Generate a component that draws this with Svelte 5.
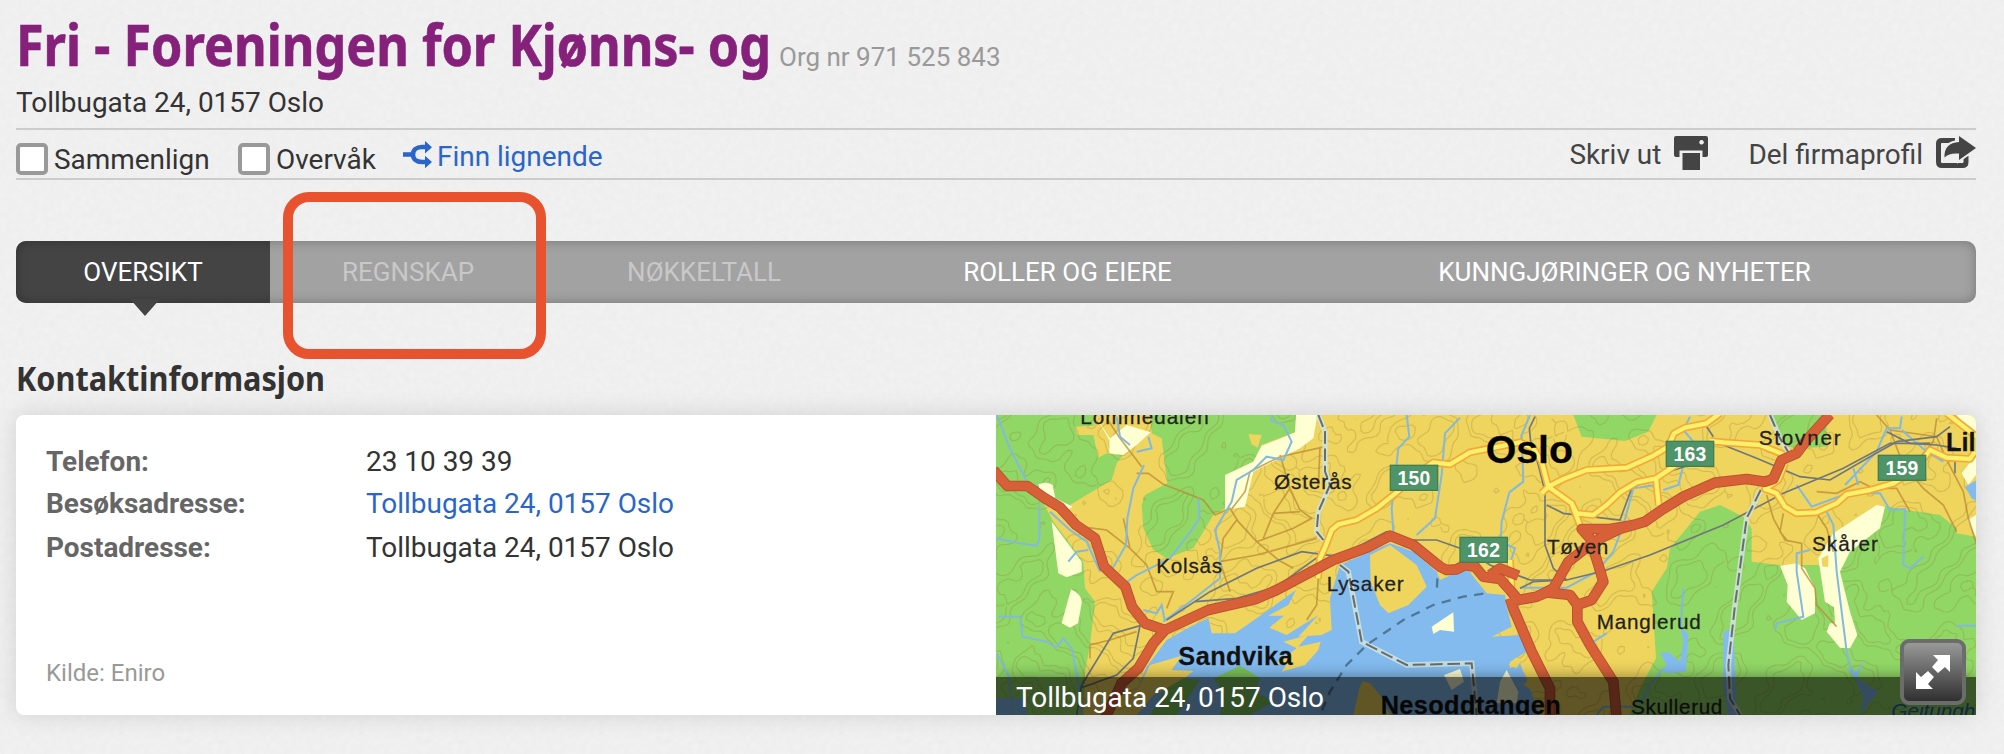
<script>
  const tabs = [
    { label: 'OVERSIKT', width: 254, state: 'active' },
    { label: 'REGNSKAP', width: 276, state: 'disabled' },
    { label: 'NØKKELTALL', width: 316, state: 'disabled' },
    { label: 'ROLLER OG EIERE', width: 411, state: '' },
    { label: 'KUNNGJØRINGER OG NYHETER', width: 703, state: '' }
  ];

  // Height contours: level sets of a smooth terrain function, traced by marching squares.
  function height(x, y) {
    const u = x / 100, v = y / 100;
    return (
      Math.sin(u * 1.7 + Math.sin(v * 1.3) * 1.4) +
      Math.cos(v * 2.1 + Math.sin(u * 1.1) * 1.7) +
      0.45 * Math.sin(u * 4.3 + v * 2.9) +
      0.3 * Math.cos(v * 6.1 - u * 3.7) +
      0.16 * Math.sin(u * 11.3 + v * 8.7)
    );
  }
  function trace() {
    const step = 12;
    let d = '';
    for (let x = 18; x < 2958; x += step) {
      for (let y = 30; y < 930; y += step) {
        const c = [[x, y], [x + step, y], [x + step, y + step], [x, y + step]];
        const h = c.map(([a, b]) => height(a, b));
        for (const level of [-1.5, -0.8, 0.9, 1.5]) {
          const hits = [];
          for (let i = 0; i < 4; i++) {
            const j = (i + 1) % 4;
            if (h[i] > level !== h[j] > level) {
              const t = (level - h[i]) / (h[j] - h[i]);
              hits.push(`${(c[i][0] + (c[j][0] - c[i][0]) * t).toFixed(0)} ${(c[i][1] + (c[j][1] - c[i][1]) * t).toFixed(0)}`);
            }
          }
          if (hits.length >= 2) d += `M${hits[0]}L${hits[1]}`;
        }
      }
    }
    return d;
  }
  const contours = trace();

  const yellowRoads = [
    'M984 520L990 460L1008 420L1025 375L1045 358L1100 345L1160 310L1220 262L1270 215L1330 172L1380 178L1440 142L1500 130L1590 112L1630 130L1655 170L1675 245L1655 265M1675 245L1720 222L1790 195L1910 188L1990 152L2035 125L2052 85L2085 68L2150 55L2190 25',
    'M1675 245L1745 295L1760 325L1810 330L1850 300L1890 262L1940 232L1998 220L2050 185L2110 150M1998 220L2006 300M1745 295L1770 360M2160 108L2200 112L2310 120L2380 148M2385 175L2365 225L2325 252L2360 265L2385 305L2420 325L2480 322L2540 295L2570 268L2640 255L2710 235L2780 190L2820 135L2870 158L2940 162L2955 140M2870 25L2960 95M1560 465L1565 545'
  ];
  const redRoads =
    'M10 195L52 243L112 243L165 280L210 307L258 360L315 400L342 485L406 545L426 605L465 655L525 675L655 615L795 583L860 555L1030 465L1130 428L1200 392L1270 420L1350 485L1370 495L1400 493L1425 480L1455 485L1480 515L1530 522L1560 555L1585 585L1640 575L1690 550L1710 515L1735 470L1780 435L1830 400L1890 372L1965 350L2015 315L2080 275L2175 233L2270 222L2325 230L2350 222L2375 165L2420 145L2450 105L2520 28M525 675L490 715L445 790L395 835L345 940M1560 580L1570 610L1625 740L1680 850L1680 940M1640 575L1670 562L1740 570L1762 600L1762 650L1800 720L1870 830L1880 940M1762 600L1805 585L1840 530L1825 480L1800 400L1775 372L1860 372L1930 360M1500 510L1530 490L1585 512';
</script>

<div class="page">
  <header>
    <div class="titleline">
      <svg class="title" width="756" height="84" viewBox="0 0 756 84" role="img" aria-label="Fri - Foreningen for Kjønns- og">
        <text x="0" y="66" textLength="755" lengthAdjust="spacingAndGlyphs">Fri - Foreningen for Kjønns- og</text>
      </svg>
      <span class="org">Org nr 971 525 843</span>
    </div>
    <div class="address">Tollbugata 24, 0157 Oslo</div>
  </header>

  <div class="tools">
    <label><i class="box"></i>Sammenlign</label>
    <label class="watch"><i class="box"></i>Overvåk</label>
    <a class="similar" href="#similar">
      <svg width="29" height="28" viewBox="0 0 29 28">
        <path d="M0 13.500H10M24 6H19C13.500 6 10 9 10 13.500S13.500 21 19 21H24" fill="none" stroke="currentColor" stroke-width="4.600" />
        <path d="M22 0L29 6.200L22 12.500ZM22 14.800L29 21L22 27.300Z" fill="currentColor" />
      </svg>
      Finn lignende
    </a>
    <div class="actions">
      <span>Skriv ut</span>
      <svg class="printer" width="34" height="34" viewBox="0 0 34 34">
        <path fill="#444" fill-rule="evenodd" d="M2 0H32Q34 0 34 2V19Q34 21 32 21H28.500V14.500H5.500V21H2Q0 21 0 19V2Q0 0 2 0ZM27.500 4A2.300 2.300 0 1 0 27.600 4ZM8.500 17H26V34H8.500Z" />
      </svg>
      <span>Del firmaprofil</span>
      <svg class="share" width="40" height="33" viewBox="0 0 40 33">
        <path d="M19 4.500H6Q2.500 4.500 2.500 7.500V26Q2.500 29.500 6 29.500H26.500Q30 29.500 30 26V20" fill="none" stroke="#444" stroke-width="5" />
        <path d="M23 0L40 12L23 24V17.500C16 17 12 18 8.500 21.500C8 11.500 13.500 6.500 23 6Z" fill="#444" stroke="#eee" stroke-width="4" paint-order="stroke" />
      </svg>
    </div>
  </div>

  <nav>
    {#each tabs as tab}
      <a href="#tab" class={tab.state} style="width:{tab.width}px"><span>{tab.label}</span></a>
    {/each}
    <div class="marker"></div>
  </nav>

  <svg class="heading" width="320" height="40" viewBox="0 0 320 40" role="img" aria-label="Kontaktinformasjon">
    <text x="0" y="31" textLength="309" lengthAdjust="spacingAndGlyphs">Kontaktinformasjon</text>
  </svg>

  <section class="card">
    <div class="info">
      <dl>
        <dt>Telefon:</dt><dd>23 10 39 39</dd>
        <dt>Besøksadresse:</dt><dd><a href="#map">Tollbugata 24, 0157 Oslo</a></dd>
        <dt>Postadresse:</dt><dd>Tollbugata 24, 0157 Oslo</dd>
      </dl>
      <div class="source">Kilde: Eniro</div>
    </div>
    <div class="map">
      <svg width="980" height="300" viewBox="18 30 2940 900">
        <rect x="18" y="30" width="2940" height="900" fill="#efd45e" />
        <g fill="#91d766">
          <path d="M18 30H310L312 62L255 65L262 90L310 90L325 158L350 145L398 152L380 175L365 225L240 300L150 275L190 350L280 470L285 550L315 590L300 720L285 800L280 930H18Z" />
          <path d="M480 30H920V80L815 120L790 170L708 210L705 310L670 330L610 430L530 460L490 435L460 370L455 300L465 270L532 235L515 100L485 85Z" />
          <path d="M1750 30H2000L1975 80L1905 108L1775 95ZM2340 30H2510V125L2430 130L2390 125L2360 80Z" />
          <path d="M1918 930L1950 850L1998 760L1985 560L2030 490L2040 430L2090 370L2130 320L2190 300L2260 335L2285 370V470L2370 480H2490L2530 385L2680 302L2750 315L2850 330L2900 370L2900 385L2958 395V930Z" />
        </g>
        <path d="M775 87L815 90L803 128L785 118Z" fill="#efd45e" />
        <path d={contours} fill="none" stroke="#8f7f33" stroke-opacity=".27" stroke-width="3.500" stroke-linecap="round" />
        <g fill="#ffffd4">
          <path d="M145 238Q170 228 188 240L196 280L248 305L225 320L155 275ZM185 350L275 470V500L230 517L205 505ZM243 553Q278 570 275 595L264 655L240 668L215 655ZM320 40L360 100L410 60L482 82L440 120L400 150L358 145V105ZM918 30H982L970 100L930 130L790 200L765 305L705 315V210L790 170L815 122L860 105L915 82Z" />
          <g transform="translate(1980)">
            <path d="M390 482L440 475L465 490L495 550V625L455 645L410 590L413 540ZM505 460L550 385L680 300L705 305L690 370L600 440L570 500L600 620L622 690L600 730L570 728L530 680L540 655L555 655L552 607L525 590ZM920 30H978V90L955 75ZM978 150L935 205L955 240L978 210ZM953 345L978 330V395Z" />
          </g>
        </g>
        <g fill="#83bbef">
          <path d="M452 830L470 785L530 705L600 665L655 640L665 685L735 685L800 640L918 555L895 600L835 632L882 632L838 668L890 690L985 630L925 695L995 690L1025 675L1020 580L1050 480L1140 440L1200 415L1270 440L1340 500L1350 525L1430 490L1490 565L1545 570L1550 605L1565 665L1505 695L1590 690L1610 740L1560 770V790L1590 775L1650 930H440Z" />
          <path d="M2978 215L2925 245L2945 280L2978 300ZM2070 660L2095 690L2088 800L2040 805L2010 800L2030 780L2010 745L2035 740L2070 770L2080 710ZM2200 680L2230 670L2240 930H2215L2200 850ZM2570 790L2600 800L2625 760L2600 820L2665 860L2640 890L2610 930L2620 880L2595 820ZM18 880H110V930H18Z" />
        </g>
        <path d="M1325 665L1390 622L1392 680L1350 675L1330 687ZM1362 810L1410 792L1422 830L1385 855ZM1530 830L1550 795L1585 860L1580 895H1520Z" fill="#ffffd4" />
        <g fill="#efd45e">
          <path d="M1140 450L1200 420L1280 480L1310 545L1255 600L1195 625L1170 600L1142 530ZM875 800L895 770L850 782L920 730L880 710L955 690L925 725L992 710L985 735L945 780ZM480 780L575 752L545 795L610 798L560 840L490 870L440 930H420L450 840ZM1090 930L1108 850L1118 828L1140 835L1170 870L1200 930ZM1555 780L1575 760L1592 768L1580 790ZM1600 840L1620 822L1645 830L1635 860Z" />
          <path d="M2495 460L2515 450V485H2497Z" />
        </g>
        <path d="M672 820L750 782L810 820L795 860L850 890L780 930H690L700 870ZM530 850L580 820L630 825L600 870L560 930H480Z" fill="#7bc25a" />

        <g fill="none" stroke="#b98a35" stroke-opacity=".75" stroke-width="5">
          <path d="M440 205H475L520 238L590 265L640 285L675 330L720 310L745 350L800 410L865 465L910 490M1005 125L870 155L780 200L765 260L725 312M870 150L885 200L900 250L930 315L965 340L910 370L800 410M990 125L985 250M900 250L850 325L820 400M850 325L930 320M270 365L350 375L420 430L470 480L500 560H550L530 610M740 345L700 400L690 470L720 560M690 470L800 450L980 400M350 40L390 100L455 185M985 520L980 600L950 645M300 760V720L360 705L440 680M400 340L420 430" />
          <path d="M2330 270L2350 340L2385 405L2435 415V490L2475 550L2480 600L2540 665M2380 325L2370 380L2395 410M2480 325L2510 370L2530 440M2660 30L2700 75L2840 95L2870 165L2920 260L2935 340L2960 420M2700 75L2740 180L2800 250L2860 300L2900 380M2480 260L2540 265L2610 230L2650 250L2720 250L2760 320M2840 40L2830 110L2770 180" />
        </g>
        <g fill="none" stroke="#82b9df" stroke-width="6">
          <path d="M20 30L60 130L108 225M148 300V400L140 422L90 415L18 400M25 635H90L98 695L170 710L197 728L220 700L245 730L265 830L275 930M20 745L55 810L70 930M180 320L240 375L290 410L330 500M235 470L260 440L295 435M380 35L390 95L420 120M440 140L485 130L475 95M462 180L430 250L412 340L408 420L365 495M625 280L628 340L605 375L540 460L440 510L405 535M845 30V48L880 60L905 110L880 165L830 155L790 195L740 225L725 290L675 375L690 440L690 520L600 590L520 650M460 615L500 625L515 600L525 650" />
          <path d="M1250 30L1258 95L1225 130L1205 310L1210 380M1410 38L1365 85L1355 210L1335 340L1280 390M1620 30L1595 90L1600 230L1558 262L1535 350L1532 410L1575 430L1555 490M1590 548H1730L1820 500L1870 440L1900 360L1930 250L2000 240M1810 710L1850 685M1820 930L1840 905H1930M1950 900L1980 840L2020 790" />
          <path d="M2100 35L2080 75L2110 110M2078 190L2065 240L2020 255M2080 550L2072 670M2420 240L2465 305L2560 270M2735 35L2730 70H2690L2660 140L2565 240M2735 75L2810 140L2860 170M2590 190L2605 240M2630 265H2670L2700 315L2745 312L2740 480L2760 490L2800 455M2510 320L2530 360L2540 500L2570 740L2585 800M2460 435L2420 445V500L2440 635L2360 655L2355 675M2900 662H2960" />
        </g>
        <g fill="none" stroke="#6f777c" stroke-width="5">
          <path d="M530 645L660 560L800 490L935 440L1045 455L1190 380L1260 405H1340L1440 440L1500 480L1620 525L1730 525L1840 498L1980 450L2200 360L2380 265L2560 190L2700 115L2820 115M615 590L740 580L860 545L985 455M275 840L370 685L450 662L430 760L380 810L270 850M260 930L275 840" />
          <path d="M1635 35L1618 70L1622 110L1645 180L1665 260L1665 420L1690 490L1730 525M1670 300L1720 325L1890 345L1925 250L1990 215L2100 180M1590 550L1630 530L1730 525M2200 120L2300 160L2430 215L2520 225L2640 155L2720 110L2840 95L2880 65M2690 80L2760 115L2840 120L2900 130M2895 170V205M2150 65L2170 95" />
        </g>
        <g fill="none">
          <path d="M985 30L1005 80V200L1020 240L985 320L980 380L1000 405M1050 480L1075 500L1115 710L1250 780L1445 775L1460 930M2340 30L2370 100L2400 150M2312 255L2270 340L2235 600L2215 780L2220 880L2250 930" stroke="#cfe3df" stroke-width="16" stroke-opacity=".85" />
          <path d="M985 30L1005 80V200L1020 240L985 320L980 380L1000 405M1050 480L1075 500L1115 710L1250 780L1445 775L1460 930M2340 30L2370 100L2400 150M2312 255L2270 340L2235 600L2215 780L2220 880L2250 930" stroke="#686d6b" stroke-width="6" stroke-dasharray="38 14" />
          <path d="M1480 566L1420 575L1330 600L1240 645L1130 720L1070 780L1020 860L990 930M1342 520L1340 570" stroke="#4f7895" stroke-width="7" stroke-dasharray="28 22" />
        </g>

        {#each yellowRoads as road}
          <path d={road} fill="none" stroke="#f2a93b" stroke-width="23" stroke-linejoin="round" />
        {/each}
        {#each yellowRoads as road}
          <path d={road} fill="none" stroke="#fff069" stroke-width="13" stroke-linejoin="round" />
        {/each}
        <path d={redRoads} fill="none" stroke="#b95333" stroke-width="32" stroke-linejoin="round" />
        <path d={redRoads} fill="none" stroke="#d76039" stroke-width="26" stroke-linejoin="round" />

        <g class="places">
          <text x="271" y="58" textLength="385">Lommedalen</text>
          <text x="852" y="251" textLength="233">Østerås</text>
          <text x="499" y="503" textLength="197">Kolsås</text>
          <text x="1010" y="557" textLength="231">Lysaker</text>
          <text x="1671" y="448" textLength="184">Tøyen</text>
          <text x="1820" y="671" textLength="312">Manglerud</text>
          <text x="2306" y="119" textLength="246">Stovner</text>
          <text x="2466" y="437" textLength="198">Skårer</text>
          <text x="1923" y="928" textLength="274">Skullerud</text>
          <text class="strong" x="565" y="780" textLength="343">Sandvika</text>
          <text class="strong" x="1172" y="928" textLength="540">Nesoddtangen</text>
          <text class="strong" x="2868" y="138">Lill</text>
          <text class="city" x="1487" y="173" textLength="262">Oslo</text>
          <text class="lake" x="2704" y="938">Geitungh</text>
        </g>
        <g class="shields">
          {#each [[1201, 181, '150'], [1410, 397, '162'], [2029, 109, '163'], [2665, 151, '159']] as [x, y, n]}
            <rect {x} {y} width="142" height="75" />
            <text x={x + 71} y={y + 58}>{n}</text>
          {/each}
        </g>
      </svg>
      <div class="caption">Tollbugata 24, 0157 Oslo</div>
      <button aria-label="Utvid kart">
        <svg width="34" height="34" viewBox="0 0 34 34">
          <path fill="#fff" d="M17 0H34V17L29 12L22 18L16 12L22 5ZM0 34V17L5 22L12 16L18 22L12 29L17 34Z" />
        </svg>
      </button>
    </div>
  </section>

  <div class="highlight"></div>
</div>

<style>
  :global(body) {
    background: #f1f1f1 url("data:image/svg+xml,%3Csvg xmlns='http://www.w3.org/2000/svg' width='240' height='240'%3E%3Cfilter id='n'%3E%3CfeTurbulence type='fractalNoise' baseFrequency='.16' numOctaves='3' stitchTiles='stitch'/%3E%3CfeColorMatrix values='0 0 0 0 .5 0 0 0 0 .5 0 0 0 0 .5 .14 0 0 0 -.04'/%3E%3C/filter%3E%3Crect width='240' height='240' filter='url(%23n)'/%3E%3C/svg%3E");
  }
  .page {
    position: relative;
    box-sizing: border-box;
    width: 2004px;
    height: 754px;
    padding: 0 28px 0 16px;
    overflow: hidden;
    font-family: Roboto, sans-serif;
    font-size: 27.950px;
    color: #333;
  }
  a { text-decoration: none; color: #2a66c9; }
  svg { display: block; flex: none; }
  header { height: 128px; }
  .titleline { display: flex; height: 85px; }
  .title, .heading { overflow: visible; }
  .title text, .heading text { font-family: "Noto Sans", sans-serif; font-weight: 700; }
  .title text { font-size: 57px; fill: #85217b; stroke: #85217b; stroke-width: .6; }
  .org { margin-left: 7px; padding-top: 41px; font-size: 26px; line-height: 32px; color: #999; }
  .address { line-height: 36px; }

  .tools {
    display: flex;
    align-items: flex-start;
    box-sizing: border-box;
    height: 52px;
    border-top: 2px solid #ccc;
    border-bottom: 2px solid #ccc;
    line-height: 34px;
  }
  .tools label { display: flex; width: 222px; padding-top: 13px; }
  .tools .watch { width: 165px; }
  .box {
    box-sizing: border-box;
    width: 32px;
    height: 32px;
    margin-right: 6px;
    border: 4px solid #999;
    border-radius: 5px;
    background: #fff;
  }
  .similar { display: flex; gap: 5px; padding-top: 10px; }
  .similar svg { margin-top: 1px; }
  .actions { display: flex; margin-left: auto; padding-top: 8px; color: #444; }
  .printer { margin: -2px 40px 0 13px; }
  .share { margin: -2px 0 0 13px; overflow: visible; }

  nav {
    position: relative;
    display: flex;
    height: 62px;
    margin-top: 61px;
    border-radius: 10px;
    background: #a2a2a2;
    line-height: 62px;
    font-size: 26px;
    text-align: center;
  }
  nav::after {
    content: "";
    position: absolute;
    inset: 0;
    border-radius: 10px;
    box-shadow: inset 0 0 12px rgba(0, 0, 0, .28);
    pointer-events: none;
  }
  nav a { color: #fff; }
  nav .active { border-radius: 10px 0 0 10px; background: #444; }
  nav .disabled { color: #c8c8c8; }
  .marker {
    position: absolute;
    z-index: 1;
    left: 114px;
    top: 58px;
    border: solid transparent;
    border-width: 17px 15px 0;
    border-top-color: #444;
  }

  .heading { margin-top: 57px; }
  .heading text { font-size: 34.500px; fill: #333; }

  .card {
    display: flex;
    height: 300px;
    margin-top: 15px;
    border-radius: 8px;
    background: #fff;
    box-shadow: 0 0 24px rgba(0, 0, 0, .13);
  }
  .info { box-sizing: border-box; width: 980px; padding: 26px 30px; }
  dl { display: grid; grid-template-columns: 320px 1fr; grid-template-rows: 42px 44px 42px; height: 214px; margin: 0; line-height: 42px; }
  dt { font-weight: 700; color: #666; }
  dd { margin: 0; }
  .source { font-size: 24px; line-height: 36px; color: #999; }
  .map { position: relative; width: 980px; overflow: hidden; border-radius: 0 8px 0 0; }
  .places text { font: 62px "Liberation Sans", sans-serif; fill: #222; stroke: #222; stroke-width: .8; }
  .places .strong { font-size: 76px; font-weight: 700; fill: #111; }
  .places .city { font-size: 118px; font-weight: 700; fill: #000; }
  .places .lake { font-style: italic; fill: #2864a4; stroke: none; }
  .shields rect { fill: #4e9468; stroke: #3f7f54; stroke-width: 4; }
  .shields text { font: 700 58px "Liberation Sans", sans-serif; letter-spacing: 1px; fill: #fff; text-anchor: middle; }
  .caption {
    position: absolute;
    inset: auto 0 0;
    height: 38px;
    padding-left: 20px;
    background: rgba(0, 0, 0, .6);
    box-shadow: 0 0 16px rgba(0, 0, 0, .4);
    line-height: 41px;
    color: #fff;
  }
  button {
    position: absolute;
    right: 10px;
    bottom: 10px;
    display: grid;
    place-items: center;
    width: 66px;
    height: 66px;
    padding: 0;
    border: 4px solid #6c6c6c;
    border-radius: 9px;
    background: linear-gradient(#999, #303030);
  }
  .highlight {
    position: absolute;
    z-index: 2;
    left: 283px;
    top: 192px;
    box-sizing: border-box;
    width: 263px;
    height: 167px;
    border: 10px solid #e8522e;
    border-radius: 26px;
  }
</style>
